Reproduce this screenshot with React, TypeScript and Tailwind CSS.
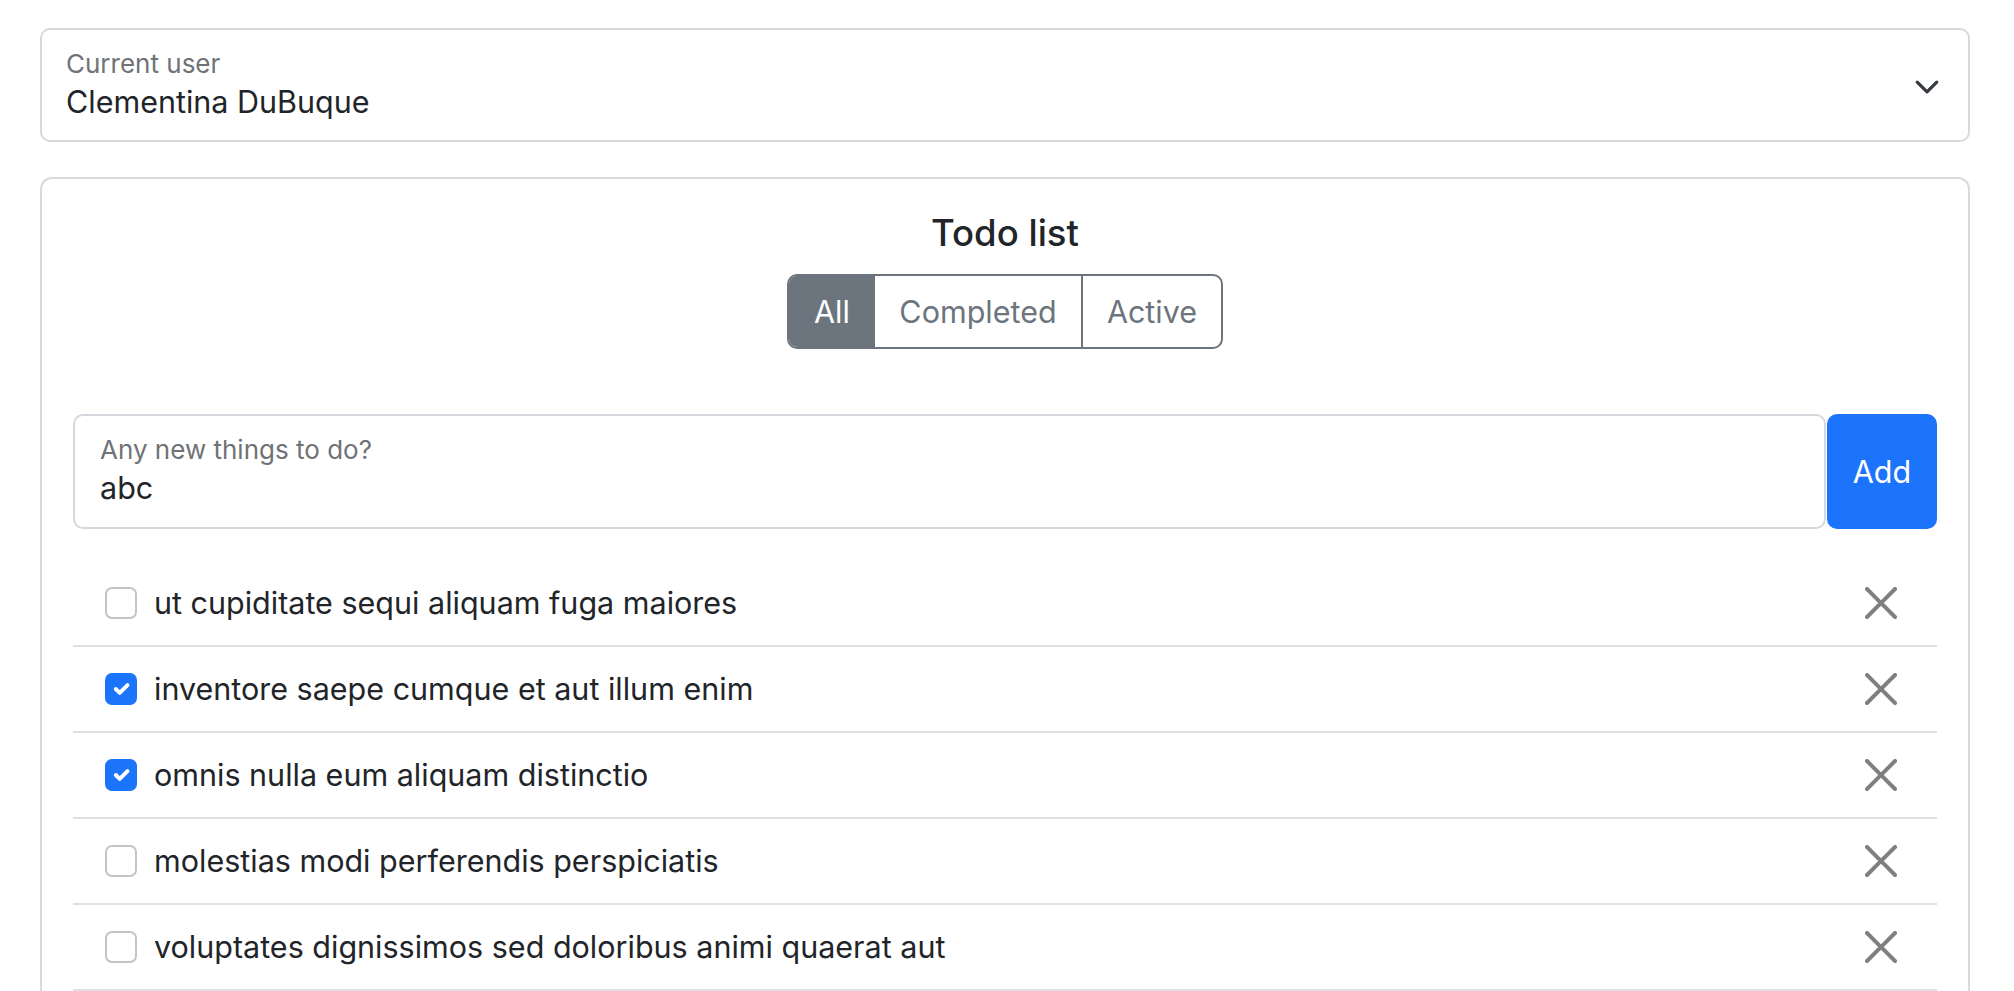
import React from "react";

const todos = [
  { text: "ut cupiditate sequi aliquam fuga maiores", done: false },
  { text: "inventore saepe cumque et aut illum enim", done: true },
  { text: "omnis nulla eum aliquam distinctio", done: true },
  { text: "molestias modi perferendis perspiciatis", done: false },
  { text: "voluptates dignissimos sed doloribus animi quaerat aut", done: false },
];

function Chevron() {
  return (
    <svg width="26" height="26" viewBox="0 0 16 16" fill="none">
      <path d="m2 5 6 6 6-6" stroke="#343a40" strokeWidth="2" strokeLinecap="round" strokeLinejoin="round" />
    </svg>
  );
}

function CloseIcon() {
  return (
    <svg width="32" height="32" viewBox="0 0 16 16">
      <path
        fill="#000"
        fillOpacity="0.5"
        d="M.293.293a1 1 0 0 1 1.414 0L8 6.586 14.293.293a1 1 0 1 1 1.414 1.414L9.414 8l6.293 6.293a1 1 0 0 1-1.414 1.414L8 9.414l-6.293 6.293a1 1 0 0 1-1.414-1.414L6.586 8 .293 1.707a1 1 0 0 1 0-1.414z"
      />
    </svg>
  );
}

function Checkbox({ checked }: { checked: boolean }) {
  if (checked) {
    return (
      <span className="flex h-[32px] w-[32px] shrink-0 items-center justify-center rounded-[7px] bg-[#1d74fc]">
        <svg width="26" height="26" viewBox="0 0 20 20" fill="none">
          <path d="m6 10 3 3 6-6" stroke="#fff" strokeWidth="3" strokeLinecap="round" strokeLinejoin="round" />
        </svg>
      </span>
    );
  }
  return <span className="block h-[32px] w-[32px] shrink-0 rounded-[7px] border-2 border-[#c4c4c4] bg-white" />;
}

export default function App() {
  return (
    <div className="min-h-screen bg-white pl-[40px] pr-[44px] pt-[28px] text-[#212529] font-['Inter',sans-serif]">
      <div className="flex h-[114px] items-start justify-between rounded-[10px] border-2 border-[#d5d9de] pl-[24px] pr-[28px] pt-[20px]">
        <div className="flex flex-col">
          <span className="text-[26px] leading-[28px] text-[#6f7377]">Current user</span>
          <span className="text-[30.5px] leading-[48px]">Clementina DuBuque</span>
        </div>
        <div className="mt-[24px]">
          <Chevron />
        </div>
      </div>

      <div className="mt-[35px] rounded-[12px] border-2 border-[#dadada] px-[31px] pb-[34px] pt-[33px]">
        <h4 className="text-center text-[36.5px] font-medium leading-[42px]">Todo list</h4>
        <div className="mt-[20px] flex justify-center">
          <div className="flex h-[75px] overflow-hidden rounded-[10px] border-2 border-[#6c757d] text-[30.5px]">
            <div className="flex w-[86px] items-center justify-center bg-[#6c757d] text-white">All</div>
            <div className="flex w-[208px] items-center justify-center border-r-2 border-[#6c757d] text-[#6c757d]">Completed</div>
            <div className="flex w-[138px] items-center justify-center text-[#6c757d]">Active</div>
          </div>
        </div>

        <div className="mt-[65px] flex h-[115px] gap-[1px]">
          <div className="flex flex-1 flex-col rounded-[10px] border-2 border-[#d5d9de] pl-[25px] pt-[20px]">
            <span className="text-[26px] leading-[28px] text-[#6f7377]">Any new things to do?</span>
            <span className="text-[30.5px] leading-[48px]">abc</span>
          </div>
          <button className="flex w-[110px] items-center justify-center rounded-[10px] bg-[#1d74fc] text-[30.5px] text-white">
            Add
          </button>
        </div>

        <div className="mt-[32px]">
          {todos.map((t, i) => (
            <div key={i} className="flex h-[86px] items-center border-b-2 border-[#dfdfdf] pl-[32px] pr-[40px]">
              <Checkbox checked={t.done} />
              <span className="ml-[17px] flex-1 text-[30.5px]">{t.text}</span>
              <CloseIcon />
            </div>
          ))}
        </div>
      </div>
    </div>
  );
}
